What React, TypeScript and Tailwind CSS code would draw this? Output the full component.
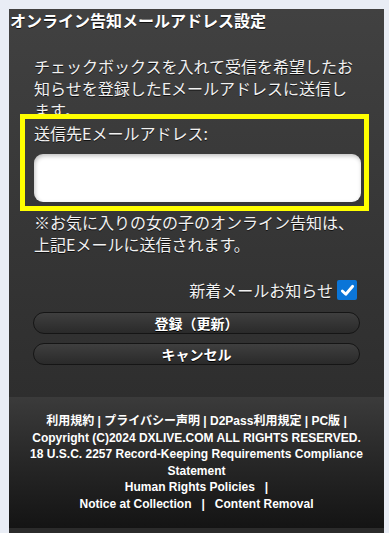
import React from "react";

const jp = { fontFamily: '"Noto Sans CJK JP", "Liberation Sans", sans-serif' };
const ft = { fontFamily: '"Liberation Sans", "Noto Sans CJK JP", sans-serif' };

export default function App() {
  return (
    <div className="min-h-screen bg-[#e9edf5] pt-[9px]">
      <div className="ml-[9px] w-[375px]">
        <div
          className="bg-gradient-to-b from-[#414141] to-[#2e2e2e] pb-[32px] text-white [text-shadow:0_1px_0_#111]"
          style={jp}
        >
          <div className="h-[46px] pl-[1px] text-[16px] font-bold leading-[22px]">
            オンライン告知メールアドレス設定
          </div>
          <p className="h-[59px] overflow-hidden px-[25px] text-[16px] leading-[22px] text-[#f2f2f2]">
            チェックボックスを入れて受信を希望したお知らせを登録したEメールアドレスに送信します。
          </p>
          <div className="ml-[11px] w-[349px] border-[5px] border-[#ffff00] pl-[9px] pr-[3px] pt-[3px] pb-[4px]">
            <div className="text-[16px] leading-[22px] text-[#f2f2f2]">送信先Eメールアドレス:</div>
            <div className="mt-[10px] h-[48px] rounded-[9px] bg-white shadow-[inset_1px_2px_4px_rgba(0,0,0,0.25)]" />
          </div>
          <div className="px-[25px] text-[16px] leading-[22px] text-[#f2f2f2]">
            <div>※お気に入りの女の子のオンライン告知は、</div>
            <div>上記Eメールに送信されます。</div>
          </div>
          <div className="mt-[24px] flex h-[22px] items-center justify-end pr-[27px]">
            <span className="text-[16px] leading-[22px] text-[#f2f2f2]">新着メールお知らせ</span>
            <span className="ml-[4px] flex h-[20px] w-[20px] items-center justify-center rounded-[2px] bg-[#0b75d8]">
              <svg width="15" height="15" viewBox="0 0 16 16">
                <path d="M2.5 8.5 L6.2 12 L13.5 3.5" fill="none" stroke="#fff" strokeWidth="3" strokeLinecap="round" strokeLinejoin="round" />
              </svg>
            </span>
          </div>
          <div className="ml-[24px] mt-[11px] flex w-[327px] flex-col gap-[9px]">
            <button className="h-[22px] rounded-full border border-[#151515] bg-gradient-to-b from-[#3f3f3f] to-[#2a2a2a] text-[14px] font-bold leading-[20px] text-white [text-shadow:0_1px_0_#000]">
              登録（更新）
            </button>
            <button className="h-[22px] rounded-full border border-[#151515] bg-gradient-to-b from-[#3f3f3f] to-[#2a2a2a] text-[14px] font-bold leading-[20px] text-white [text-shadow:0_1px_0_#000]">
              キャンセル
            </button>
          </div>
        </div>
        <div
          className="bg-gradient-to-b from-[#3b3b3b] to-[#141414] px-[10px] py-[16px] text-center text-[12px] font-bold leading-[16.5px] text-white"
          style={ft}
        >
          <div>利用規約 | プライバシー声明 | D2Pass利用規定 | PC版 |</div>
          <div>Copyright (C)2024 DXLIVE.COM ALL RIGHTS RESERVED.</div>
          <div>18 U.S.C. 2257 Record-Keeping Requirements Compliance</div>
          <div>Statement</div>
          <div>Human Rights Policies &nbsp;&nbsp;|</div>
          <div>Notice at Collection &nbsp;&nbsp;|&nbsp;&nbsp; Content Removal</div>
        </div>
        <div className="h-[20px] bg-[#2b2b2b]" />
      </div>
    </div>
  );
}
